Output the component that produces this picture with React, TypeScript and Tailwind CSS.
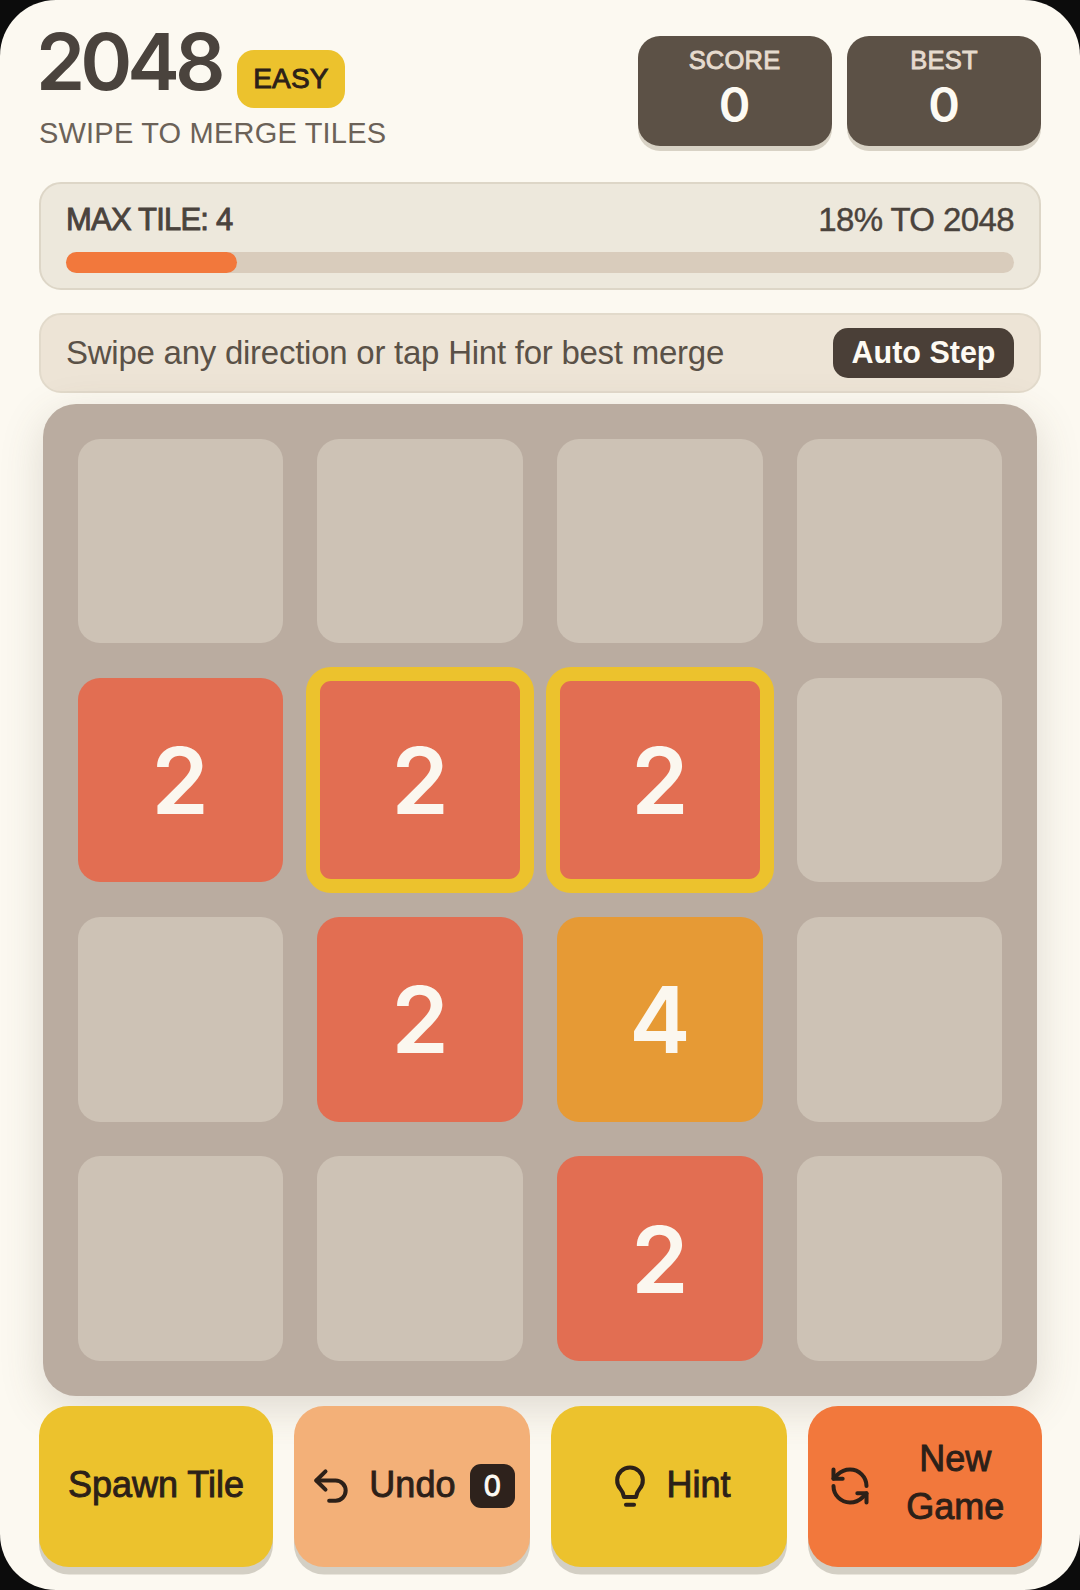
import { RefreshCcw, Undo2 } from 'lucide-react';

const medium = '[-webkit-text-stroke:0.9px_currentColor]';

const board: number[][] = [
  [0, 0, 0, 0],
  [2, 2, 2, 0],
  [0, 2, 4, 0],
  [0, 0, 2, 0],
];

const isHinted = (row: number, col: number) => row === 1 && (col === 1 || col === 2);

function Tile({ value, hinted }: { value: number; hinted: boolean }) {
  if (value === 0) return <div className="rounded-[22px] bg-[#cdc2b5]" />;
  const color = value === 4 ? 'bg-[#e69a35]' : 'bg-[#e26e52]';
  return (
    <div
      className={`flex items-center justify-center pt-[2px] font-["Inter",sans-serif] text-[92px] leading-none font-semibold text-[#fbf7ef] ${color} ${
        hinted ? '-m-[11px] rounded-[25px] border-[14px] border-[#ecc22d]' : 'rounded-[22px]'
      }`}
    >
      {value}
    </div>
  );
}

function ScoreBox({ label }: { label: string }) {
  return (
    <div className="flex h-[110px] w-[194px] flex-col items-center rounded-[22px] bg-[#5c5146] pt-[8px] shadow-[0_5px_0_#d8d2c5]">
      <span className={`text-[25.5px] leading-[32px] tracking-[0.2px] text-[#e6dbce] ${medium}`}>{label}</span>
      <span className='mt-[1px] font-["Inter",sans-serif] text-[48px] leading-[56px] font-semibold text-[#fdfaf3]'>0</span>
    </div>
  );
}

function BulbIcon() {
  return (
    <svg width="44" height="44" viewBox="0 0 24 24" fill="none" stroke="currentColor" strokeWidth="2.2" strokeLinecap="round" strokeLinejoin="round">
      <path d="M8.7 18c-.2-1.8-.9-3.2-2-4.5A7 7 0 1 1 17.3 13.5c-1.1 1.3-1.8 2.7-2 4.5Z" />
      <path d="M9.8 22.2h4.4" />
    </svg>
  );
}

export default function App() {
  return (
    <div className='h-[1590px] w-[1080px] bg-[#0c0c0c] font-["Liberation_Sans",Arial,sans-serif]'>
      <div className="flex h-full flex-col overflow-hidden rounded-[56px] bg-[#fcf9f1] px-[39px]">
        <header className="flex h-[182px] shrink-0 items-start justify-between">
          <div>
            <div className="flex items-start">
              <h1 className='mt-[15px] -ml-[3px] w-[201px] font-["Inter",sans-serif] text-[79px] leading-[92px] font-semibold tracking-[-5px] text-[#4a433d]'>2048</h1>
              <span className={`mt-[50px] flex h-[58px] w-[108px] items-center justify-center rounded-[17px] bg-[#ecc22d] text-[28px] tracking-[0.2px] text-[#2c2018] ${medium}`}>
                EASY
              </span>
            </div>
            <p className="mt-[6.5px] text-[29px] leading-[36px] tracking-[0.2px] text-[#6b6258]">SWIPE TO MERGE TILES</p>
          </div>
          <div className="mt-[35.5px] flex gap-[15.5px]">
            <ScoreBox label="SCORE" />
            <ScoreBox label="BEST" />
          </div>
        </header>

        <section className="h-[107.5px] shrink-0 rounded-[22px] border-[2.5px] border-[#ddd6c7] bg-[#ede8dc] px-[25px] pt-[17px]">
          <div className="flex items-center justify-between text-[33px] leading-[38px] text-[#4a433d]">
            <span className={`text-[31px] tracking-[-0.8px] ${medium}`}>MAX TILE: 4</span>
            <span className="tracking-[-0.6px] [-webkit-text-stroke:0.4px_currentColor]">18% TO 2048</span>
          </div>
          <div className="mt-[13px] h-[20.5px] rounded-full bg-[#d9ccbc]">
            <div className="h-full rounded-full bg-[#f2783c]" style={{ width: '18%' }} />
          </div>
        </section>

        <section className="mt-[23.5px] flex h-[80px] shrink-0 items-center justify-between rounded-[22px] border-[2.5px] border-[#e2dacb] bg-[#ede4d6] px-[25px]">
          <span className="text-[33px] tracking-[-0.25px] text-[#5a5147]">Swipe any direction or tap Hint for best merge</span>
          <button className="flex h-[50px] w-[181px] items-center justify-center rounded-[15px] bg-[#4a3f37] text-[30.5px] font-bold text-[#fdfaf3]">
            Auto Step
          </button>
        </section>

        <div className="mx-[4px] mt-[11px] grid h-[991.5px] shrink-0 grid-cols-4 grid-rows-4 gap-[34.6px] rounded-[33px] bg-[#baaca0] p-[34.6px] shadow-[0_12px_44px_rgba(90,75,60,0.18)]">
          {board.flatMap((cells, row) =>
            cells.map((value, col) => <Tile key={`${row}-${col}`} value={value} hinted={isHinted(row, col)} />),
          )}
        </div>

        <div className={`relative mt-[10.5px] grid h-[160.5px] shrink-0 grid-cols-[234px_236.6px_236.6px_234px] gap-[20.6px] text-[36px] leading-[48px] text-[#2c2018] ${medium}`}>
          <button className="rounded-[30px] bg-[#ecc22d] pb-[2px] shadow-[0_7.5px_0_#d3cfc4]">Spawn Tile</button>
          <button className="flex items-center justify-center gap-[16.5px] rounded-[30px] bg-[#f3b078] shadow-[0_7.5px_0_#d3cfc4]">
            <Undo2 size={44} strokeWidth={2.2} />
            <span className="pb-[2px]">Undo</span>
            <span className='-ml-[2px] flex h-[44px] w-[45px] items-center justify-center rounded-[11px] bg-[#2e221c] font-["Inter",sans-serif] text-[28px] text-[#fdfaf3]'>0</span>
          </button>
          <button className="flex items-center justify-center gap-[15px] rounded-[30px] bg-[#ecc22d] shadow-[0_7.5px_0_#d3cfc4]">
            <BulbIcon />
            <span className="pb-[2px]">Hint</span>
          </button>
          <button className="flex items-center gap-[16.5px] rounded-[30px] bg-[#f2783c] px-[20px] shadow-[0_7.5px_0_#d3cfc4]">
            <RefreshCcw size={44} strokeWidth={2.2} className="shrink-0" />
            <span className="flex-1 pb-[6px] text-center">New Game</span>
          </button>
        </div>
      </div>
    </div>
  );
}
